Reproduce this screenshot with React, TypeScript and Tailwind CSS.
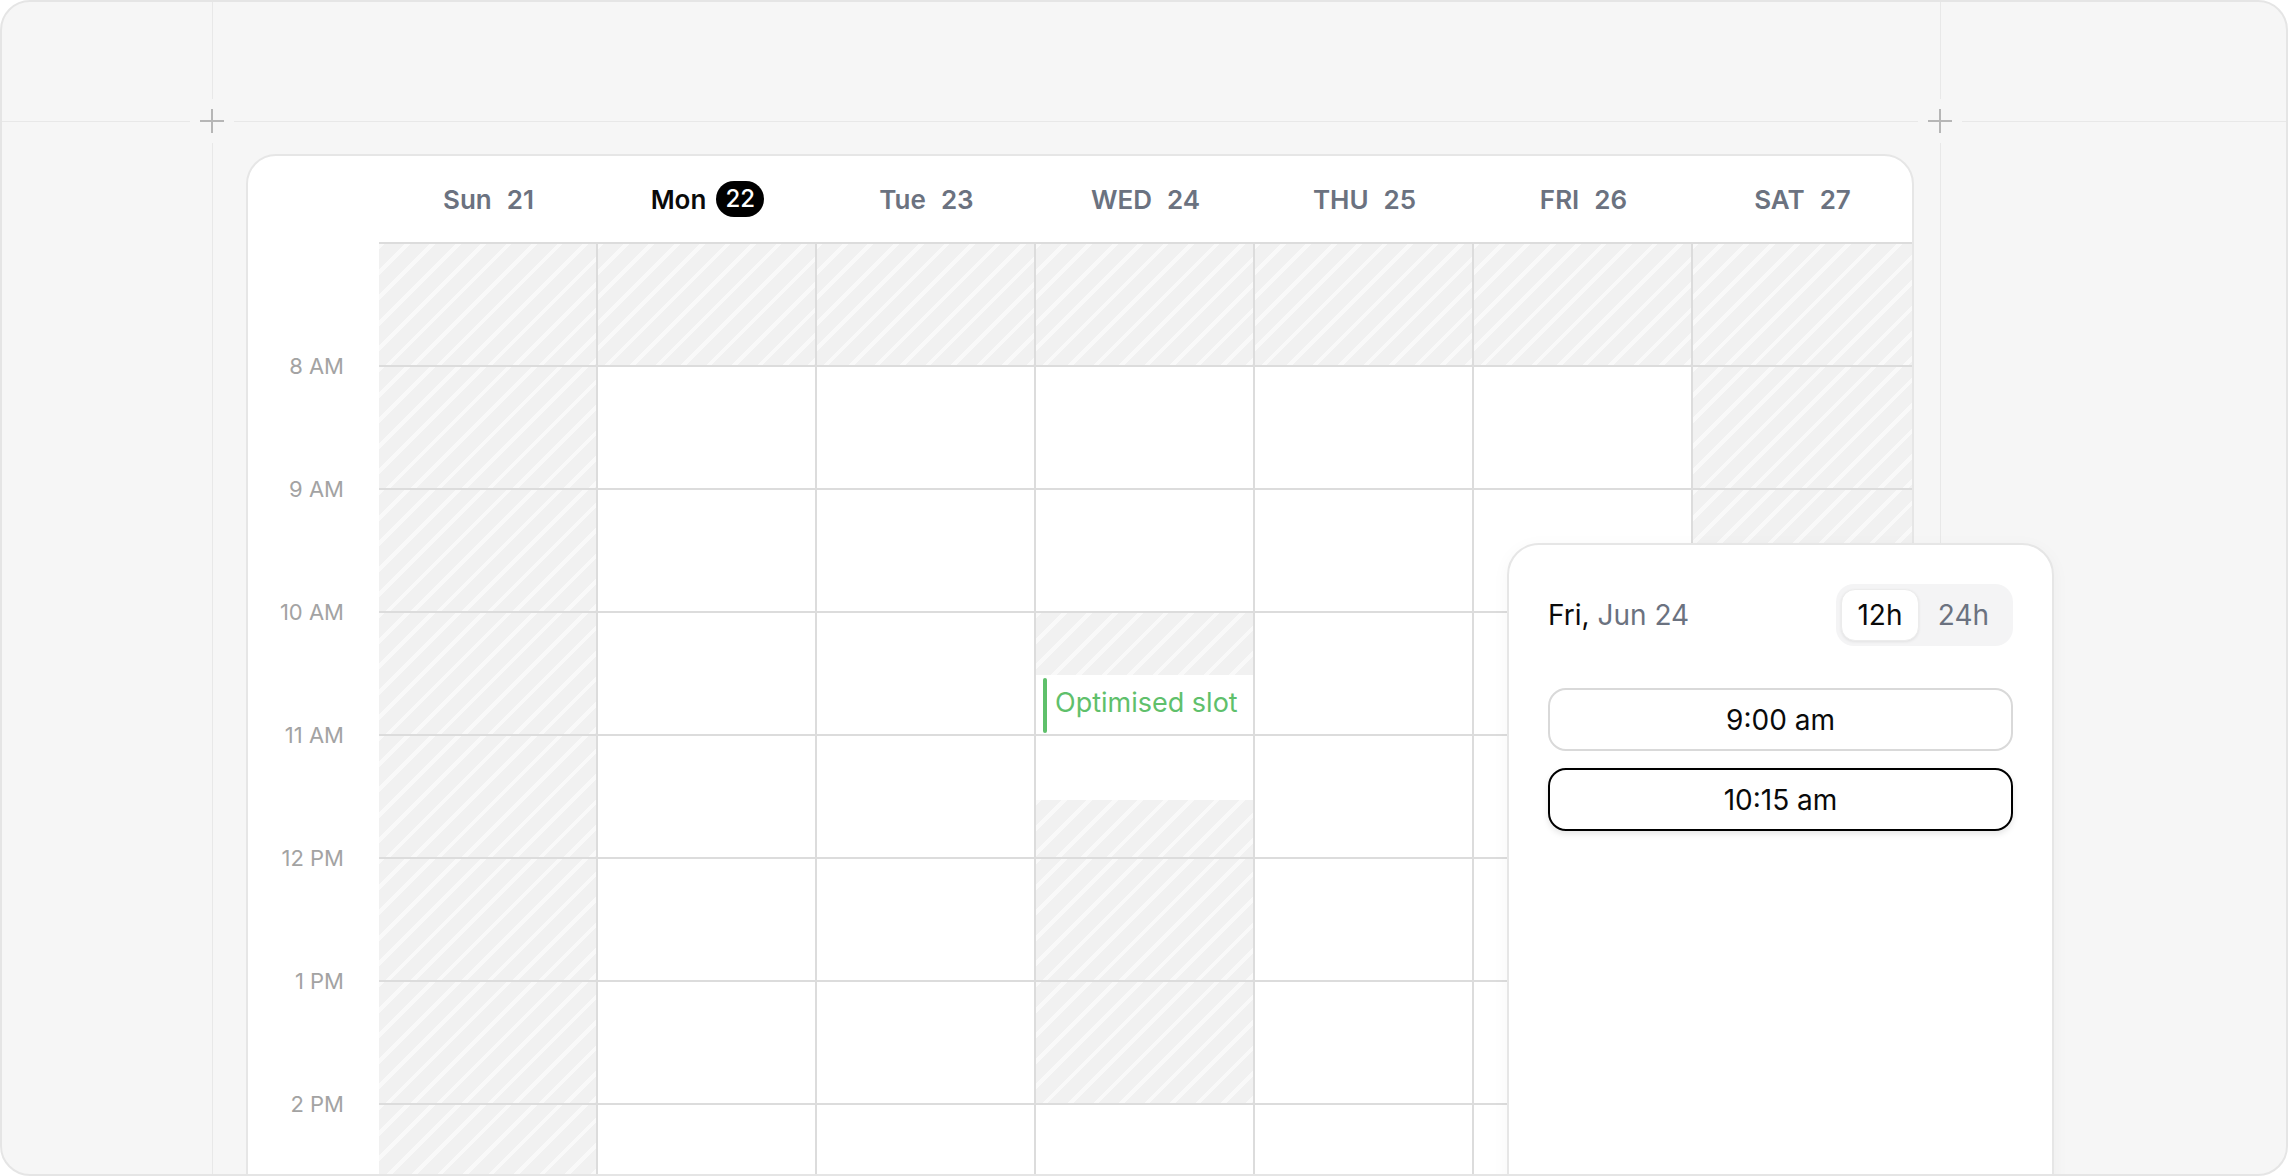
const HATCH =
    'bg-[#f1f1f1] bg-[image:repeating-linear-gradient(135deg,#f9f9f9_0px,#f9f9f9_4px,transparent_4px,transparent_18px)]';

type Cell = 'hatch' | 'open' | 'slot' | 'slotEnd';

const days = [
    { name: 'Sun', num: 21 },
    { name: 'Mon', num: 22, today: true },
    { name: 'Tue', num: 23 },
    { name: 'WED', num: 24 },
    { name: 'THU', num: 25 },
    { name: 'FRI', num: 26 },
    { name: 'SAT', num: 27 },
];

const allHatch: Cell[] = ['hatch', 'hatch', 'hatch', 'hatch', 'hatch', 'hatch', 'hatch', 'hatch'];
const weekday: Cell[] = ['hatch', 'open', 'open', 'open', 'open', 'open', 'open', 'open'];

const columns: Cell[][] = [
    allHatch,
    weekday,
    weekday,
    ['hatch', 'open', 'open', 'slot', 'slotEnd', 'hatch', 'hatch', 'open'],
    weekday,
    weekday,
    allHatch,
];

const hours = ['8 AM', '9 AM', '10 AM', '11 AM', '12 PM', '1 PM', '2 PM'];

function Plus({ className }: { className: string }) {
    return (
        <div className={`absolute h-[44px] w-[44px] bg-[#f6f6f6] ${className}`}>
            <div className="absolute left-[21px] top-[10px] h-[24px] w-[2px] bg-[#b6b6b6]" />
            <div className="absolute left-[10px] top-[21px] h-[2px] w-[24px] bg-[#b6b6b6]" />
        </div>
    );
}

function GridCell({ type }: { type: Cell }) {
    if (type === 'hatch') {
        return <div className={`h-[123px] border-b-2 border-[#dcdcdc] ${HATCH}`} />;
    }
    if (type === 'slot') {
        return (
            <div className="flex h-[123px] flex-col border-b-2 border-[#dcdcdc]">
                <div className={`h-[62px] ${HATCH}`} />
                <div className="flex flex-1 items-center gap-[8px] pl-[7px] pt-[1px]">
                    <div className="h-[55px] w-[4px] rounded-full bg-[#5fc06b]" />
                    <span className="-mt-[4px] text-[27px] text-[#5fc06b]">Optimised slot</span>
                </div>
            </div>
        );
    }
    if (type === 'slotEnd') {
        return (
            <div className="flex h-[123px] flex-col border-b-2 border-[#dcdcdc]">
                <div className="h-[64px]" />
                <div className={`flex-1 ${HATCH}`} />
            </div>
        );
    }
    return <div className="h-[123px] border-b-2 border-[#dcdcdc]" />;
}

export default function App() {
    return (
        <div className="bg-white font-['Inter',sans-serif]">
            <div className="relative h-[1176px] w-[2288px] overflow-hidden rounded-[30px] border-2 border-[#e5e5e5] bg-[#f6f6f6]">
                {/* guide lines */}
                <div className="absolute left-0 right-0 top-[119px] h-px bg-[#e8e8e8]" />
                <div className="absolute bottom-0 left-[210px] top-0 w-px bg-[#e8e8e8]" />
                <div className="absolute bottom-0 left-[1938px] top-0 w-px bg-[#e8e8e8]" />
                <Plus className="left-[188px] top-[97px]" />
                <Plus className="left-[1916px] top-[97px]" />

                {/* calendar card */}
                <div className="relative ml-[244px] mt-[152px] w-[1668px] rounded-t-[30px] border-2 border-[#e6e6e6] bg-white">
                    <div className="flex h-[86px]">
                        <div className="w-[131px]" />
                        {days.map((d) => (
                            <div key={d.name} className="flex w-[219px] items-center justify-center">
                                {d.today ? (
                                    <div className="flex items-center gap-[10px]">
                                        <span className="text-[26px] font-semibold text-[#0a0a0a]">{d.name}</span>
                                        <span className="flex h-[36px] w-[48px] items-center justify-center rounded-full bg-black text-[24px] font-medium text-white">
                                            {d.num}
                                        </span>
                                    </div>
                                ) : (
                                    <div className="flex items-center gap-[15px] text-[26px] font-semibold text-[#6b7280]">
                                        <span>{d.name}</span>
                                        <span>{d.num}</span>
                                    </div>
                                )}
                            </div>
                        ))}
                    </div>

                    <div className="flex">
                        <div className="w-[131px] pt-[63px]">
                            {hours.map((h) => (
                                <div key={h} className="flex h-[123px] items-center justify-end pr-[35px] text-[22px] text-[#a3a3a3]">
                                    {h}
                                </div>
                            ))}
                        </div>
                        <div className="flex w-[1533px] border-t-2 border-[#dcdcdc]">
                            {columns.map((col, i) => (
                                <div
                                    key={i}
                                    className={`w-[219px] ${i < 6 ? 'border-r-2 border-[#dcdcdc]' : ''}`}
                                >
                                    {col.map((c, j) => (
                                        <GridCell key={j} type={c} />
                                    ))}
                                </div>
                            ))}
                        </div>
                    </div>
                </div>

                {/* time picker popover */}
                <div className="absolute left-[1505px] top-[541px] h-[700px] w-[547px] rounded-[32px] border-2 border-[#e6e6e6] bg-white p-[39px] shadow-[0_4px_18px_rgba(0,0,0,0.04)]">
                    <div className="flex h-[62px] items-center justify-between">
                        <div className="text-[28px] text-[#0a0a0a]">
                            Fri, <span className="text-[#6b7280]">Jun 24</span>
                        </div>
                        <div className="flex h-[62px] w-[177px] rounded-[18px] bg-[#f4f4f5] p-[5px]">
                            <div className="flex w-[78px] items-center justify-center rounded-[14px] border border-[#ececec] bg-white text-[28px] text-[#0a0a0a] shadow-[0_1px_3px_rgba(0,0,0,0.08)]">
                                12h
                            </div>
                            <div className="flex flex-1 items-center justify-center text-[28px] text-[#6b7280]">
                                24h
                            </div>
                        </div>
                    </div>
                    <div className="mt-[42px] flex h-[63px] items-center justify-center rounded-[18px] border-2 border-[#d9d9d9] text-[28px] text-[#0a0a0a]">
                        9:00 am
                    </div>
                    <div className="mt-[17px] flex h-[63px] items-center justify-center rounded-[18px] border-2 border-black text-[28px] text-[#0a0a0a] shadow-[0_3px_6px_rgba(0,0,0,0.1)]">
                        10:15 am
                    </div>
                </div>
            </div>
        </div>
    );
}
